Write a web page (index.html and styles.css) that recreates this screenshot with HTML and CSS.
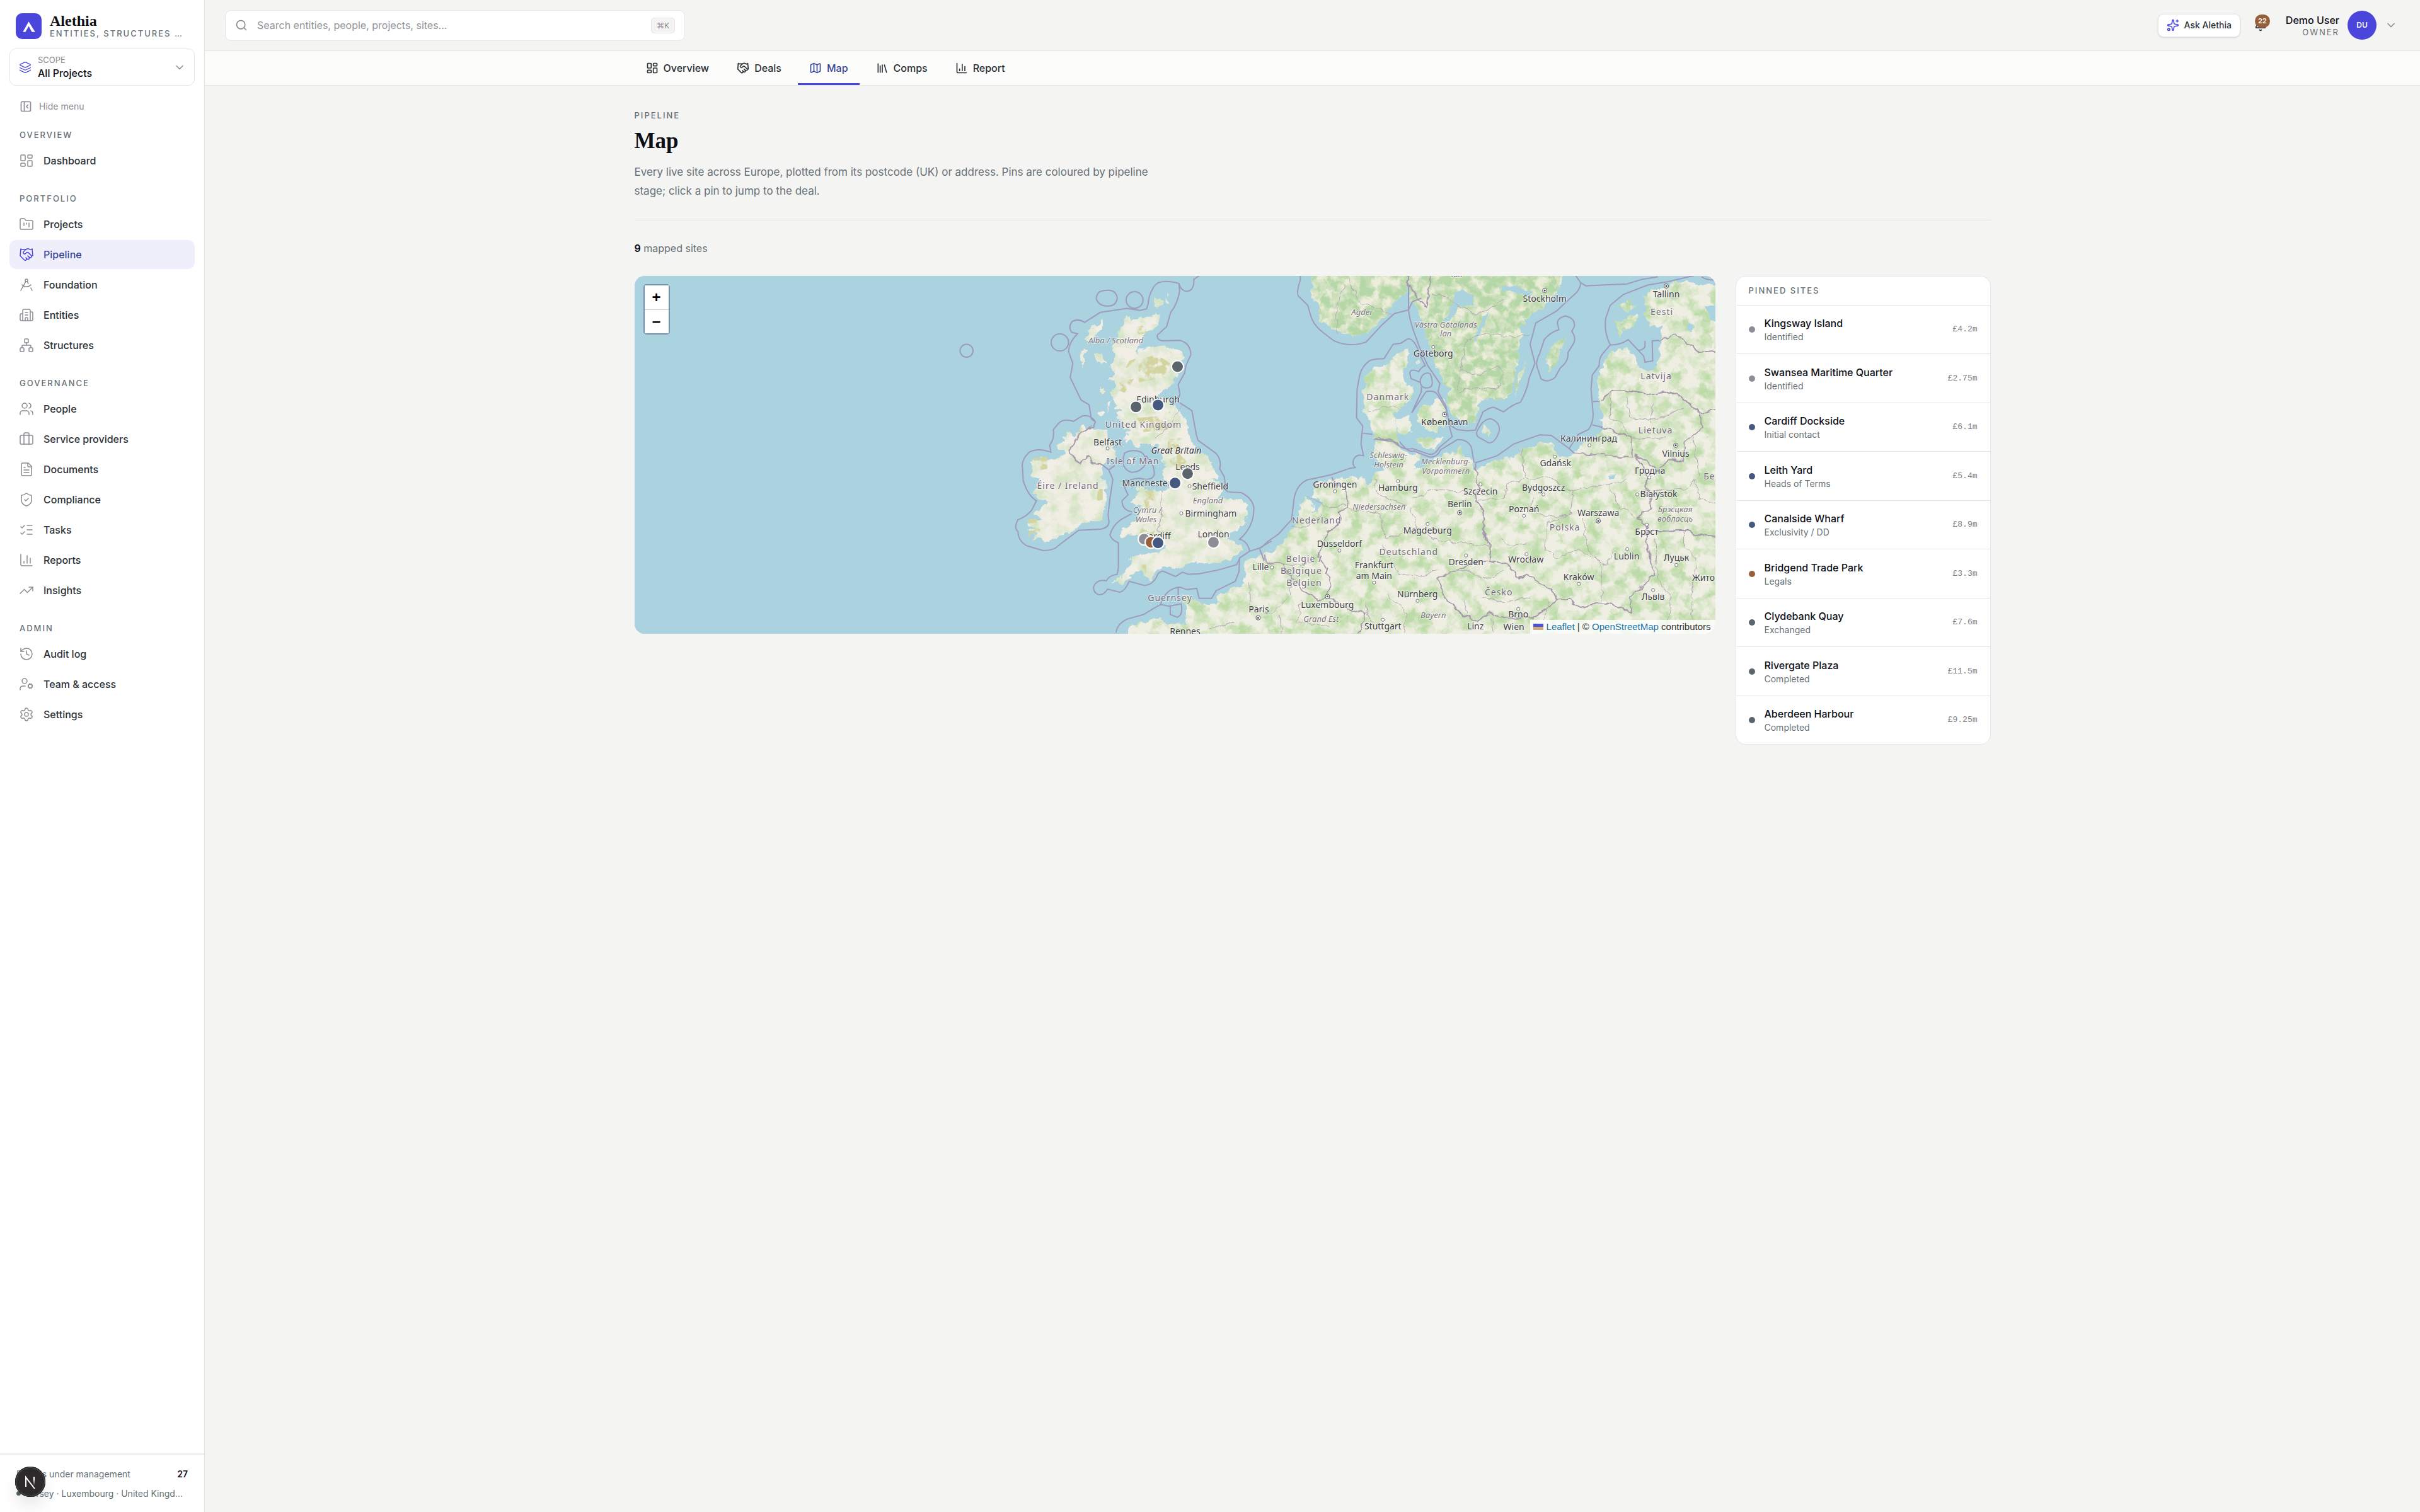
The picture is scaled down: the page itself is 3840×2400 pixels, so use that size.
FILE: index.html
```html
<!DOCTYPE html>
<html lang="en">
<head>
<meta charset="utf-8">
<meta name="viewport" content="width=device-width, initial-scale=1">
<title>Map · Pipeline · Alethia</title>
<link rel="stylesheet" href="styles.css">
</head>
<body>
<svg class="sprite" aria-hidden="true">
  <symbol id="i-layers" viewBox="0 0 24 24"><path d="M12.83 2.18a2 2 0 0 0-1.66 0L2.6 6.08a1 1 0 0 0 0 1.83l8.58 3.91a2 2 0 0 0 1.66 0l8.58-3.9a1 1 0 0 0 0-1.83z"/><path d="M2 12a1 1 0 0 0 .58.91l8.6 3.91a2 2 0 0 0 1.65 0l8.58-3.9A1 1 0 0 0 22 12"/><path d="M2 17a1 1 0 0 0 .58.91l8.6 3.91a2 2 0 0 0 1.65 0l8.58-3.9A1 1 0 0 0 22 17"/></symbol>
  <symbol id="i-chevron" viewBox="0 0 24 24"><path d="m6 9 6 6 6-6"/></symbol>
  <symbol id="i-panel" viewBox="0 0 24 24"><rect width="18" height="18" x="3" y="3" rx="2"/><path d="M9 3v18"/><path d="m16 15-3-3 3-3"/></symbol>
  <symbol id="i-dashboard" viewBox="0 0 24 24"><rect width="7" height="9" x="3" y="3" rx="1"/><rect width="7" height="5" x="14" y="3" rx="1"/><rect width="7" height="9" x="14" y="12" rx="1"/><rect width="7" height="5" x="3" y="16" rx="1"/></symbol>
  <symbol id="i-folder" viewBox="0 0 24 24"><path d="M4 20h16a2 2 0 0 0 2-2V8a2 2 0 0 0-2-2h-7.93a2 2 0 0 1-1.66-.9l-.82-1.2A2 2 0 0 0 7.93 3H4a2 2 0 0 0-2 2v13c0 1.1.9 2 2 2Z"/><path d="M8 10v4"/><path d="M12 10v2"/><path d="M16 10v6"/></symbol>
  <symbol id="i-handshake" viewBox="0 0 24 24"><path d="m11 17 2 2a1 1 0 1 0 3-3"/><path d="m14 14 2.5 2.5a1 1 0 1 0 3-3l-3.88-3.88a3 3 0 0 0-4.24 0l-.88.88a1 1 0 1 1-3-3l2.81-2.81a5.79 5.79 0 0 1 7.06-.87l.47.28a2 2 0 0 0 1.42.25L21 4"/><path d="m21 3 1 11h-2"/><path d="M3 3 2 14l6.5 6.5a1 1 0 1 0 3-3"/><path d="M3 4h8"/></symbol>
  <symbol id="i-compass" viewBox="0 0 24 24"><path d="m12.99 6.74 1.93 3.44"/><path d="M19.136 12a10 10 0 0 1-14.271 0"/><path d="m21 21-2.16-3.84"/><path d="m3 21 8.02-14.26"/><circle cx="12" cy="5" r="2"/></symbol>
  <symbol id="i-building" viewBox="0 0 24 24"><path d="M10 12h4"/><path d="M10 8h4"/><path d="M14 21v-3a2 2 0 0 0-4 0v3"/><path d="M6 10H4a2 2 0 0 0-2 2v7a2 2 0 0 0 2 2h16a2 2 0 0 0 2-2V9a2 2 0 0 0-2-2h-2"/><path d="M6 21V5a2 2 0 0 1 2-2h8a2 2 0 0 1 2 2v16"/></symbol>
  <symbol id="i-network" viewBox="0 0 24 24"><rect x="16" y="16" width="6" height="6" rx="1"/><rect x="2" y="16" width="6" height="6" rx="1"/><rect x="9" y="2" width="6" height="6" rx="1"/><path d="M5 16v-3a1 1 0 0 1 1-1h12a1 1 0 0 1 1 1v3"/><path d="M12 12V8"/></symbol>
  <symbol id="i-users" viewBox="0 0 24 24"><path d="M16 21v-2a4 4 0 0 0-4-4H6a4 4 0 0 0-4 4v2"/><path d="M16 3.128a4 4 0 0 1 0 7.744"/><path d="M22 21v-2a4 4 0 0 0-3-3.87"/><circle cx="9" cy="7" r="4"/></symbol>
  <symbol id="i-briefcase" viewBox="0 0 24 24"><path d="M16 20V4a2 2 0 0 0-2-2h-4a2 2 0 0 0-2 2v16"/><rect width="20" height="14" x="2" y="6" rx="2"/></symbol>
  <symbol id="i-file" viewBox="0 0 24 24"><path d="M6 22a2 2 0 0 1-2-2V4a2 2 0 0 1 2-2h8a2.4 2.4 0 0 1 1.704.706l3.588 3.588A2.4 2.4 0 0 1 20 8v12a2 2 0 0 1-2 2z"/><path d="M14 2v5a1 1 0 0 0 1 1h5"/><path d="M10 9H8"/><path d="M16 13H8"/><path d="M16 17H8"/></symbol>
  <symbol id="i-shield" viewBox="0 0 24 24"><path d="M20 13c0 5-3.5 7.5-7.66 8.95a1 1 0 0 1-.67-.01C7.5 20.5 4 18 4 13V6a1 1 0 0 1 1-1c2 0 4.5-1.2 6.24-2.72a1.17 1.17 0 0 1 1.52 0C14.51 3.81 17 5 19 5a1 1 0 0 1 1 1z"/><path d="m9 12 2 2 4-4"/></symbol>
  <symbol id="i-checks" viewBox="0 0 24 24"><path d="M13 5h8"/><path d="M13 12h8"/><path d="M13 19h8"/><path d="m3 17 2 2 4-4"/><path d="m3 7 2 2 4-4"/></symbol>
  <symbol id="i-chart" viewBox="0 0 24 24"><path d="M3 3v16a2 2 0 0 0 2 2h16"/><path d="M18 17V9"/><path d="M13 17V5"/><path d="M8 17v-3"/></symbol>
  <symbol id="i-trend" viewBox="0 0 24 24"><path d="M16 7h6v6"/><path d="m22 7-8.5 8.5-5-5L2 17"/></symbol>
  <symbol id="i-history" viewBox="0 0 24 24"><path d="M3 12a9 9 0 1 0 9-9 9.75 9.75 0 0 0-6.74 2.74L3 8"/><path d="M3 3v5h5"/><path d="M12 7v5l4 2"/></symbol>
  <symbol id="i-usercog" viewBox="0 0 24 24"><path d="M10 15H6a4 4 0 0 0-4 4v2"/><path d="m14.305 16.53.923-.382"/><path d="m15.228 13.852-.923-.383"/><path d="m16.852 12.228-.383-.923"/><path d="m16.852 17.772-.383.924"/><path d="m19.148 12.228.383-.923"/><path d="m19.53 18.696-.382-.924"/><path d="m20.772 13.852.924-.383"/><path d="m20.772 16.148.924.383"/><circle cx="18" cy="15" r="3"/><circle cx="9" cy="7" r="4"/></symbol>
  <symbol id="i-settings" viewBox="0 0 24 24"><path d="M9.671 4.136a2.34 2.34 0 0 1 4.659 0 2.34 2.34 0 0 0 3.319 1.915 2.34 2.34 0 0 1 2.33 4.033 2.34 2.34 0 0 0 0 3.831 2.34 2.34 0 0 1-2.33 4.033 2.34 2.34 0 0 0-3.319 1.915 2.34 2.34 0 0 1-4.659 0 2.34 2.34 0 0 0-3.32-1.915 2.34 2.34 0 0 1-2.33-4.033 2.34 2.34 0 0 0 0-3.831A2.34 2.34 0 0 1 6.35 6.051a2.34 2.34 0 0 0 3.319-1.915"/><circle cx="12" cy="12" r="3"/></symbol>
  <symbol id="i-search" viewBox="0 0 24 24"><path d="m21 21-4.34-4.34"/><circle cx="11" cy="11" r="8"/></symbol>
  <symbol id="i-sparkles" viewBox="0 0 24 24"><path d="M11.017 2.814a1 1 0 0 1 1.966 0l1.051 5.558a2 2 0 0 0 1.594 1.594l5.558 1.051a1 1 0 0 1 0 1.966l-5.558 1.051a2 2 0 0 0-1.594 1.594l-1.051 5.558a1 1 0 0 1-1.966 0l-1.051-5.558a2 2 0 0 0-1.594-1.594l-5.558-1.051a1 1 0 0 1 0-1.966l5.558-1.051a2 2 0 0 0 1.594-1.594z"/><path d="M20 2v4"/><path d="M22 4h-4"/><circle cx="4" cy="20" r="2"/></symbol>
  <symbol id="i-bell" viewBox="0 0 24 24"><path d="M10.268 21a2 2 0 0 0 3.464 0"/><path d="M3.262 15.326A1 1 0 0 0 4 17h16a1 1 0 0 0 .74-1.673C19.41 13.956 18 12.499 18 8A6 6 0 0 0 6 8c0 4.499-1.411 5.956-2.738 7.326"/></symbol>
  <symbol id="i-map" viewBox="0 0 24 24"><path d="M14.106 5.553a2 2 0 0 0 1.788 0l3.659-1.83A1 1 0 0 1 21 4.619v12.764a1 1 0 0 1-.553.894l-4.553 2.277a2 2 0 0 1-1.788 0l-4.212-2.106a2 2 0 0 0-1.788 0l-3.659 1.83A1 1 0 0 1 3 19.381V6.618a1 1 0 0 1 .553-.894l4.553-2.277a2 2 0 0 1 1.788 0z"/><path d="M15 5.764v15"/><path d="M9 3.236v15"/></symbol>
  <symbol id="i-library" viewBox="0 0 24 24"><path d="m16 6 4 14"/><path d="M12 6v14"/><path d="M8 8v12"/><path d="M4 4v16"/></symbol>
</svg>

<div class="app">
  <aside class="sidebar">
    <div class="brand">
      <span class="brand-mark"><svg viewBox="0 0 40 40" aria-hidden="true"><path d="M11 29 20 13l10 16h-5l-5-9-5 9z" fill="#fff"/></svg></span>
      <div class="brand-text">
        <div class="brand-name">Alethia</div>
        <div class="brand-tag">ENTITIES, STRUCTURES …</div>
      </div>
    </div>
    <button class="scope" type="button">
      <svg class="icon scope-icon"><use href="#i-layers"/></svg>
      <span class="scope-text"><span class="scope-label">SCOPE</span><span class="scope-value">All Projects</span></span>
      <svg class="icon chevron"><use href="#i-chevron"/></svg>
    </button>
    <button class="hide-menu" type="button"><svg class="icon"><use href="#i-panel"/></svg>Hide menu</button>
    <nav class="nav" aria-label="Main">
      <h2>OVERVIEW</h2>
      <ul>
        <li><a href="#"><svg class="icon"><use href="#i-dashboard"/></svg>Dashboard</a></li>
      </ul>
      <h2>PORTFOLIO</h2>
      <ul>
        <li><a href="#"><svg class="icon"><use href="#i-folder"/></svg>Projects</a></li>
        <li><a href="#" class="active" aria-current="page"><svg class="icon"><use href="#i-handshake"/></svg>Pipeline</a></li>
        <li><a href="#"><svg class="icon"><use href="#i-compass"/></svg>Foundation</a></li>
        <li><a href="#"><svg class="icon"><use href="#i-building"/></svg>Entities</a></li>
        <li><a href="#"><svg class="icon"><use href="#i-network"/></svg>Structures</a></li>
      </ul>
      <h2>GOVERNANCE</h2>
      <ul>
        <li><a href="#"><svg class="icon"><use href="#i-users"/></svg>People</a></li>
        <li><a href="#"><svg class="icon"><use href="#i-briefcase"/></svg>Service providers</a></li>
        <li><a href="#"><svg class="icon"><use href="#i-file"/></svg>Documents</a></li>
        <li><a href="#"><svg class="icon"><use href="#i-shield"/></svg>Compliance</a></li>
        <li><a href="#"><svg class="icon"><use href="#i-checks"/></svg>Tasks</a></li>
        <li><a href="#"><svg class="icon"><use href="#i-chart"/></svg>Reports</a></li>
        <li><a href="#"><svg class="icon"><use href="#i-trend"/></svg>Insights</a></li>
      </ul>
      <h2>ADMIN</h2>
      <ul>
        <li><a href="#"><svg class="icon"><use href="#i-history"/></svg>Audit log</a></li>
        <li><a href="#"><svg class="icon"><use href="#i-usercog"/></svg>Team &amp; access</a></li>
        <li><a href="#"><svg class="icon"><use href="#i-settings"/></svg>Settings</a></li>
      </ul>
    </nav>
    <footer class="side-foot">
      <div class="foot-row"><span>Entities under management</span><b>27</b></div>
      <div class="foot-row foot-places"><i class="foot-dot"></i><span>Jersey · Luxembourg · United Kingd…</span></div>
    </footer>
    <button class="dev-badge" type="button" aria-label="Open developer tools">
      <svg viewBox="0 0 48 48" aria-hidden="true">
        <defs><linearGradient id="nfade" x1="0" y1="0" x2="0" y2="1"><stop offset=".3" stop-color="#fff"/><stop offset="1" stop-color="#fff" stop-opacity="0"/></linearGradient></defs>
        <path d="M17 32V17l14 18" fill="none" stroke="#fff" stroke-width="2"/><path d="M29 16h2v14h-2z" fill="url(#nfade)"/>
      </svg>
    </button>
  </aside>

  <div class="page">
    <header class="topbar">
      <label class="search">
        <svg class="icon"><use href="#i-search"/></svg>
        <input type="text" placeholder="Search entities, people, projects, sites..." aria-label="Search">
        <kbd>⌘K</kbd>
      </label>
      <div class="top-actions">
        <button class="ask" type="button"><svg class="icon"><use href="#i-sparkles"/></svg>Ask Alethia</button>
        <button class="bell" type="button" aria-label="Notifications"><svg class="icon"><use href="#i-bell"/></svg><span class="badge">22</span></button>
        <button class="user" type="button">
          <span class="user-text"><span class="user-name">Demo User</span><span class="user-role">OWNER</span></span>
          <span class="avatar">DU</span>
          <svg class="icon chevron"><use href="#i-chevron"/></svg>
        </button>
      </div>
    </header>

    <nav class="subnav" aria-label="Pipeline">
      <div class="wrap tabs">
        <a href="#"><svg class="icon"><use href="#i-dashboard"/></svg>Overview</a>
        <a href="#"><svg class="icon"><use href="#i-handshake"/></svg>Deals</a>
        <a href="#" class="active" aria-current="page"><svg class="icon"><use href="#i-map"/></svg>Map</a>
        <a href="#"><svg class="icon"><use href="#i-library"/></svg>Comps</a>
        <a href="#"><svg class="icon"><use href="#i-chart"/></svg>Report</a>
      </div>
    </nav>

    <main class="wrap content">
      <header class="page-head">
        <p class="eyebrow">PIPELINE</p>
        <h1>Map</h1>
        <p class="lead">Every live site across Europe, plotted from its postcode (UK) or address. Pins are coloured by pipeline stage; click a pin to jump to the deal.</p>
      </header>
      <p class="count"><b>9</b> mapped sites</p>

      <div class="board">
        <section class="map" aria-label="Map of sites">
          <svg class="map-canvas" viewBox="0 0 1716 568" preserveAspectRatio="xMinYMin slice">
            <defs>
              <filter id="rough" x="-5%" y="-5%" width="110%" height="110%"><feTurbulence type="fractalNoise" baseFrequency=".09" numOctaves="4" seed="3"/><feDisplacementMap in="SourceGraphic" scale="13" xChannelSelector="R" yChannelSelector="G"/></filter>
              <filter id="wander" x="-5%" y="-5%" width="110%" height="110%"><feTurbulence type="fractalNoise" baseFrequency=".03" numOctaves="2" seed="4"/><feDisplacementMap in="SourceGraphic" scale="26" xChannelSelector="R" yChannelSelector="G"/></filter>
              <filter id="woods" x="0" y="0" width="100%" height="100%" color-interpolation-filters="sRGB"><feTurbulence type="fractalNoise" baseFrequency=".045" numOctaves="5" seed="11"/><feColorMatrix values="0 0 0 0 .74  0 0 0 0 .86  0 0 0 0 .66  0 3 0 0 -1.2"/><feComposite in2="SourceGraphic" operator="in"/></filter>
              <filter id="dense" x="0" y="0" width="100%" height="100%" color-interpolation-filters="sRGB"><feTurbulence type="fractalNoise" baseFrequency=".06" numOctaves="5" seed="5"/><feColorMatrix values="0 0 0 0 .71  0 0 0 0 .84  0 0 0 0 .65  0 3 0 0 -.9"/><feComposite in2="SourceGraphic" operator="in"/></filter>
              <filter id="moor" x="0" y="0" width="100%" height="100%" color-interpolation-filters="sRGB"><feTurbulence type="fractalNoise" baseFrequency=".03" numOctaves="4" seed="8"/><feColorMatrix values="0 0 0 0 .83  0 0 0 0 .83  0 0 0 0 .63  0 6 0 0 -2.4"/><feComposite in2="SourceGraphic" operator="in"/></filter>
              <g id="isles" transform="translate(594 -8) scale(.3827 .3763)">
                <path d="M485 190L510 203 540 200 600 190 628 183 622 225 590 250 565 268 545 300 528 350 545 335 580 325 640 318 710 325 726 350 718 385 700 430 680 465 665 495 640 505 610 535 650 540 675 562 710 590 735 635 748 690 755 720 782 765 825 785 848 825 868 878 830 872 875 892 885 930 872 965 920 960 960 965 985 985 990 1030 975 1065 950 1095 915 1115 900 1130 965 1158 968 1170 950 1195 900 1225 860 1232 830 1235 760 1230 740 1245 700 1255 640 1250 610 1268 600 1285 585 1305 550 1270 520 1272 500 1295 465 1328 450 1310 430 1312 480 1280 510 1240 512 1205 560 1195 620 1190 655 1160 625 1165 600 1155 550 1145 535 1120 510 1112 475 1128 465 1108 470 1085 510 1070 535 1050 545 1010 560 990 500 985 530 960 540 925 600 922 640 930 662 905 640 875 650 820 632 800 640 770 610 755 625 735 560 730 530 745 515 715 480 720 485 690 505 670 475 665 450 620 470 590 440 580 440 545 425 520 445 480 415 455 440 430 420 400 440 350 425 320 450 300 450 260 475 230z"/>
                <path d="M392 208L385 248 360 270 345 295 322 285 330 255zM350 350L385 343 392 370 408 395 370 392zM302 325L320 330 315 375 308 410 298 395zM612 112L632 118 640 140 620 165 605 145zM655 85L665 95 655 108zM650 120L658 130 648 138zM372 490L410 500 390 520 378 510zM408 560L425 545 400 600zM370 590L395 590 388 612 372 606zM455 600L470 610 462 632 450 625zM500 795L525 780 520 800 505 808zM530 918L550 905 562 920 540 932z"/>
                <path d="M305 650L320 665 345 665 378 672 402 670 415 705 445 750 440 800 410 795 392 825 385 870 402 915 405 975 395 1010 382 1052 330 1062 300 1072 255 1105 190 1130 142 1150 135 1130 92 1135 110 1110 78 1095 112 1090 72 1062 140 1050 100 1030 130 1010 170 975 130 965 95 940 120 905 128 875 92 865 100 840 92 795 130 790 180 800 240 770 200 735 225 720 220 695 250 680 275 700 290 665z"/>
              </g>
              <g id="mainland" transform="translate(1094 -8) scale(.40816 .3763)">
                <path d="M-760 1540L-756 1500-700 1480-662 1468-634 1465-620 1490-590 1490-531 1492-536 1430-555 1368-512 1372-498 1400-447 1410-409 1402-409 1370-362 1345-311 1320-305 1260-301 1220-240 1200-203 1180-165 1150-133 1110-105 1060-90 985-72 955-50 965-38 1005-60 1015-20 1010-10 970-35 960-39 925-20 895 31 885 69 875 116 868 150 870 175 905 185 870 195 850 235 842 205 805 190 760 205 710 190 690 183 640 160 610 155 500 165 440 200 405 250 395 285 350 330 318 325 400 305 440 320 485 352 490 345 530 300 580 270 610 280 660 285 720 310 758 340 780 380 770 370 800 350 830 385 830 440 790 510 760 530 745 560 790 575 810 590 840 640 810 735 785 770 755 860 720 885 722 900 770 920 785 965 775 1020 720 1070 690 1088 670 1080 600 1070 550 1068 460 1080 420 1105 350 1180 318 1215 370 1235 415 1265 425 1300 395 1308 295 1315 230 1280 240 1245 200 1255 150 1245 115 1270 85 1330 65 1400 40 1470 60 1560 65V1560H-760z"/>
                <path d="M360 600L390 570 425 575 440 545 470 550 475 620 465 660 440 650 440 690 400 670 370 640zM275 625L330 615 345 660 320 690 285 670zM365 710L400 705 435 712 465 700 440 740 415 755 370 735zM355 380L370 378 362 390z"/>
                <path d="M622 655L650 678 648 696 620 685z"/>
              </g>
              <g id="nordic" transform="translate(1094 -8) scale(.40816 .3763)">
                <path d="M-44 0L-44 60-48 100-25 140-15 200 41 250 60 260 120 278 190 250 240 190 275 130 320 90 325 50 340 130 365 160 380 200 400 280 420 340 440 400 465 460 490 500 480 560 500 610 560 645 590 640 600 570 620 540 700 545 730 510 745 440 755 350 765 280 780 210 830 170 870 140 905 90 925 50 930 0z"/>
                <path d="M945 285L905 300 880 330 865 370 880 430 910 390 920 340zM790 375L755 450 740 530 765 480zM1135 215L1190 190 1230 185 1220 215 1165 255 1145 285 1140 240zM1140 150L1185 120 1215 150 1180 175z"/>
              </g>
            </defs>

            <rect width="1716" height="568" fill="#aad3df"/>
            <g filter="url(#rough)">
              <use href="#isles" fill="#f1eee5"/>
              <use href="#mainland" fill="#efeee2"/>
              <use href="#nordic" fill="#ecedda"/>
              <use href="#isles" filter="url(#woods)" opacity=".5"/>
              <use href="#mainland" filter="url(#woods)"/>
              <use href="#nordic" filter="url(#dense)"/>
            </g>
            <g filter="url(#moor)" fill="#000" transform="translate(594 -8) scale(.3827 .3763)">
              <path d="M525 240l30-10 20 30-35 10zM560 370l50-20 60 40-20 60-110 20 0-70zM460 470l60-15-40 60-20-10zM500 380l25-10-10 30-30 10zM530 620l120-10 20-20-10 80-100 10zM660 710l60-5-20 60 40 40-50 40-30-60zM100 790l60-5 0 50-45 10zM370 920l20 0 0 50-25 0zM550 930l50-5 10 60-40 20zM560 1070l50 0-10 50-60-10zM550 1240l20 0 0 40-20 0zM90 1080l40 10-10 40-40-10zM75 1050l40-5 0 20-30 0zM290 660l30 0-5 20-20 5z"/>
            </g>
            <g fill="#aad3df" filter="url(#wander)" transform="translate(1094 -8) scale(.40816 .3763)">
              <path d="M510 85l30-5 40 20 0 45-60 10-30 55-25 0 40-70zM640 175l-15 50-35 80-5-20 35-90zM690 65l60 0 60 20-10 25-50-20-60-5zM1485 150l60-20v90l-35-10zM1415 225l20 0 0 30-18 0zM1110 860l25 0-5 15-20 0z"/>
            </g>

            <g class="border" filter="url(#wander)" transform="translate(1094 -8) scale(.40816 .3763)">
              <path d="M35 870L45 900 85 910 90 1000 60 1020 70 1050 20 1100 0 1150M0 1150L-20 1200 15 1270 25 1330 10 1370 100 1430 165 1445 130 1530M-230 1200L-225 1240-170 1230-140 1270-110 1310-80 1350-20 1385 10 1375"/>
              <path d="M590 810L600 930 590 970 620 1010 625 1110 645 1170 640 1220M640 1220L560 1240 440 1300 470 1380 540 1450 600 1480 640 1440 720 1470 820 1460 910 1390M640 1220L720 1240 760 1300 790 1280 840 1320 890 1350 910 1390 950 1385 1000 1420 1070 1400 1130 1410 1200 1445 1190 1380 1285 1280 1255 1140 1260 1080 1220 1040 1275 1000 1265 930 1245 830 1210 780"/>
              <path d="M975 770L1200 785 1195 700 1150 685 1085 660M1210 780L1250 800 1300 840 1340 800 1400 800 1405 720 1440 690 1475 660 1460 600 1400 540 1340 505 1280 520 1190 505 1120 505 1075 550M1460 600L1530 590M1305 295L1370 265 1420 310 1460 345 1530 340M1260 1100L1400 1095 1530 1130M195 710L260 715 295 735M330 20L330 60 370 120 400 150 415 20"/>
            </g>
            <g class="border thin" filter="url(#wander)" transform="translate(1094 -8) scale(.40816 .3763)">
              <path d="M95 20L120 90 150 140 200 150 265 190M50 270L50 140 80 60M420 100L480 110 520 150 600 180 650 160 700 120M520 500L530 420 560 290 640 260 700 280 800 270M530 420L600 440 680 400 700 430 670 500 600 490 520 510M170 590L260 570 300 585M770 755L775 820 790 880 870 870 900 890 970 930 1110 900 1180 880M970 930L960 1030 870 1060 860 1180 910 1210 990 1180 1100 1240 1130 1180M820 960L800 1000 870 1040 950 1030M1110 900L1140 980 1210 1040M1010 1040L1030 1180 1080 1240 1085 1400M690 1130L720 1160 790 1150M600 970L700 960 710 900 790 880M470 1280L550 1260 640 1300 700 1260M550 1390L560 1450M620 1380L700 1400 800 1380M350 960L430 920 600 940M340 1000L360 1090 240 1130 220 1030 85 1000M360 1090L450 1140 640 1160M230 1160L290 1280 390 1290 440 1260M250 1370L320 1440 310 1530M160 1400L180 1480M1120 510L1110 620 1160 640 1190 700M1180 530L1190 620 1280 630 1400 580M1270 640L1285 550M1190 700L1240 710 1330 700M1440 700L1460 870 1400 920 1290 930M1440 880L1460 960 1530 990M1400 1100L1400 1160 1450 1220M1290 1130L1300 1300 1350 1380 1340 1500M1440 1530L1430 1360 1450 1240M195 880L210 940 320 990M880 1390L850 1480M640 1440L660 1520M-290 1320L-290 1420-200 1450-130 1370-120 1240M-170 1450L-165 1530M-90 1390L-100 1480 20 1500M-340 1480L-440 1510M-230 1230L-120 1240-40 1230M-120 1080L-60 1080-10 1030M-60 950L20 1000 80 990"/>
            </g>
            <g class="border" filter="url(#wander)" transform="translate(594 -8) scale(.3827 .3763)"><path d="M350 655L290 690 265 745 250 770 295 810 330 780 360 820 390 822"/></g>
            <g class="border thin" filter="url(#wander)" transform="translate(594 -8) scale(.3827 .3763)"><path d="M610 700L660 660 690 610 730 570M640 930L630 980 635 1030 620 1090 640 1120"/></g>

            <g class="sea-line" transform="translate(594 -8) scale(.3827 .3763)">
              <path d="M790 20Q775 32 768 35Q770 85 738 86 715 85 706 53Q620 30 600 70Q580 105 578 140L572 160 545 167 490 158 380 175 315 217Q290 200 265 212 245 235 260 258L285 265Q250 300 248 340L266 390 255 450 300 545 333 565 343 625 360 637"/>
              <path d="M706 53L709 85Q700 140 672 175L655 235 617 270Q612 292 640 295L710 293Q755 305 755 355L735 400 730 430 703 480 710 520 700 550 760 590 778 690 785 715 860 770Q885 800 875 835L895 870 900 925 910 933 965 936Q1012 960 1017 1000 1018 1080 958 1133Q990 1140 1000 1183L960 1210 945 1240 870 1262 790 1278 745 1280 720 1272 692 1290 640 1267Q618 1270 612 1295 590 1330 560 1327L500 1310Q480 1355 460 1356L410 1343Q395 1368 375 1367 350 1360 352 1333 365 1300 405 1308 415 1285 450 1280L455 1250V1148Q425 1135 420 1115 430 1075 465 1050L510 1025"/>
              <path d="M360 637Q340 605 305 612L268 635Q225 620 205 645L185 670Q190 710 170 735L175 765Q120 745 85 765 50 800 57 830L60 885Q80 950 115 970L95 1010Q70 1040 38 1050 20 1085 38 1100 40 1140 75 1160L140 1180Q190 1180 205 1160L290 1095 380 1090Q415 1085 416 1060L412 1030 420 960 432 880 415 840 390 820M360 637L352 655"/>
              <path d="M512 1017Q470 1010 470 970L495 945Q475 910 480 885L540 875Q600 890 604 855L600 825 570 780M415 840L440 822M480 770Q510 750 550 765 580 790 565 820 545 850 510 850 460 835 480 770z"/>
              <path d="M395 83Q365 85 363 118 375 150 410 148 445 150 450 115 445 80 410 82z"/><circle cx="522" cy="123" r="35"/><circle cx="212" cy="302" r="36"/><ellipse cx="-175" cy="337" rx="27" ry="27"/>
              <path d="M445 1526Q450 1490 490 1470L560 1450 600 1425 630 1408Q650 1340 710 1335L740 1345 780 1340 790 1382 842 1382 860 1350 940 1310 955 1270 958 1210M703 1335V1395M630 1408L665 1415 715 1405Q725 1450 700 1462L670 1450V1415M1000 1183L1040 1170 1090 1140M1040 1170L1060 1225"/>
            </g>
            <g class="sea-line" transform="translate(1094 -8) scale(.40816 .3763)">
              <path d="M-91 0L-91 40Q-110 100-95 110L-62 145-50 190Q-40 230 0 262L40 295Q100 325 165 300L225 230 275 180 330 165M330 60V165Q335 210 352 260L372 320 405 400 452 475 445 510 475 570 490 650 520 670 560 675 590 672 620 595Q655 570 665 577L700 595Q740 560 765 555 790 510 800 450L822 390 803 310 825 220 905 170 985 90Q1005 60 997 45L980 20M330 165L345 130 380 115"/>
              <path d="M372 345Q350 280 325 288L300 305 270 310 235 370Q200 370 180 378 150 400 140 440L130 500 128 620 152 655 145 730 155 780Q125 770 115 800 112 825 125 830L105 832 30 860Q-50 880-60 880-105 900-115 960L-125 1050-175 1110-215 1140-245 1170M370 345L395 400Q380 405 370 425 340 410 335 430L340 455 375 470M385 440Q400 425 415 435 430 480 415 490 395 500 380 485 370 460 385 440zM380 490V510L342 600 398 510Q430 500 445 525L480 590M152 685L190 690M200 710L270 720Q310 760 345 750L400 770Q430 785 450 745L500 700 485 640M295 720Q330 770 350 760L410 785Q440 790 455 755L520 712Q560 710 575 745L585 810"/>
              <path d="M590 810L675 780 740 730 840 692 885 694 955 750 975 770M955 750L990 690 1030 670Q1050 640 1048 600L1040 500 1045 440 1072 400Q1070 370 1085 350L1115 312Q1150 315 1185 290L1245 360 1250 385 1280 380 1278 295 1305 293M1250 295V320Q1240 335 1225 335M1115 312Q1090 260 1097 200L1115 145 1165 100 1260 60 1340 45 1440 20M1000 50L1020 63 1180 55 1240 35 1300 25M1470 25Q1490 40 1520 38M1048 552L1075 550M1045 650L1085 660"/>
              <path d="M910 225Q905 200 940 190 980 200 975 235L965 255Q985 285 970 310L950 345Q955 380 920 410L900 450Q870 475 845 455L835 420Q820 390 840 350L858 290Q880 260 915 248z"/>
              <path d="M650 624Q690 640 682 680 665 730 640 725L600 700Q590 685 600 670 620 625 650 624z"/>
            </g>

            <g class="town">
              <circle cx="751" cy="274" r="2.5"/><circle cx="881" cy="334" r="2.5"/><circle cx="868" cy="377" r="2.5"/><circle cx="1112" cy="342" r="2.5"/><circle cx="1119" cy="436" r="2.5"/><circle cx="1012" cy="463" r="2.5"/><circle cx="1268" cy="113" r="2.5"/><circle cx="1516" cy="269" r="2.5"/><circle cx="1461" cy="287" r="2.5"/><circle cx="1611" cy="320" r="2.5"/><circle cx="1212" cy="326" r="2.5"/><circle cx="1343" cy="331" r="2.5"/><circle cx="1443" cy="347" r="2.5"/><circle cx="1592" cy="347" r="2.5"/><circle cx="1412" cy="381" r="2.5"/><circle cx="1259" cy="394" r="2.5"/><circle cx="1607" cy="395" r="2.5"/><circle cx="1576" cy="434" r="2.5"/><circle cx="1654" cy="459" r="2.5"/><circle cx="1320" cy="444" r="2.5"/><circle cx="1416" cy="442" r="2.5"/><circle cx="1174" cy="487" r="2.5"/><circle cx="1499" cy="489" r="2.5"/><circle cx="1243" cy="516" r="2.5"/><circle cx="1617" cy="499" r="2.5"/><circle cx="1403" cy="529" r="2.5"/><circle cx="1188" cy="546" r="2.5"/>
            </g>
            <g class="capital">
              <circle cx="1100" cy="509" r="3.5"/><circle cx="990" cy="543" r="3.5"/><circle cx="1445" cy="23" r="3.5"/><circle cx="1638" cy="16" r="3.5"/><circle cx="1286" cy="220" r="3.5"/><circle cx="1653" cy="269" r="3.5"/><circle cx="1310" cy="376" r="3.5"/><circle cx="1530" cy="389" r="3.5"/>
            </g>
            <g class="capital-core">
              <circle cx="1100" cy="509" r="1.5"/><circle cx="990" cy="543" r="1.5"/><circle cx="1445" cy="23" r="1.5"/><circle cx="1638" cy="16" r="1.5"/><circle cx="1286" cy="220" r="1.5"/><circle cx="1653" cy="269" r="1.5"/><circle cx="1310" cy="376" r="1.5"/><circle cx="1530" cy="389" r="1.5"/>
            </g>
            <g class="label region">
              <text x="1155" y="62">Agder</text><text x="764" y="107">Alba / Scotland</text><text x="910" y="361">England</text><text x="814" y="376">Cymru /</text><text x="812" y="391">Wales</text><text x="1090" y="549">Grand Est</text><text x="1288" y="82">Västra Götalands</text><text x="1288" y="96">län</text><text x="1306" y="2">län</text><text x="1197" y="289">Schleswig-</text><text x="1197" y="304">Holstein</text><text x="1288" y="299">Mecklenburg-</text><text x="1288" y="314">Vorpommern</text><text x="1182" y="371">Niedersachsen</text><text x="1652" y="375">Брэсцкая</text><text x="1652" y="390">вобласць</text><text x="1268" y="543">Bayern</text>
            </g>
            <g class="label country">
              <text x="808" y="241">United Kingdom</text><text x="791" y="299">Isle of Man</text><text x="688" y="338">Éire / Ireland</text><text x="850" y="516">Guernsey</text><text x="1083" y="393">Nederland</text><text x="1063" y="454">België /</text><text x="1064" y="473">Belgique /</text><text x="1063" y="492">Belgien</text><text x="1631" y="62">Eesti</text><text x="1622" y="164">Latvija</text><text x="1196" y="197">Danmark</text><text x="1621" y="250">Lietuva</text><text x="1732" y="323">Беларусь</text><text x="1477" y="404">Polska</text><text x="1229" y="443">Deutschland</text><text x="1372" y="507">Česko</text>
            </g>
            <g class="label island"><text x="860" y="282">Great Britain</text></g>
            <g class="label city">
              <text x="831" y="201">Edinburgh</text><text x="751" y="269">Belfast</text><text x="878" y="308">Leeds</text><text x="813" y="334">Manchester</text><text x="914" y="339">Sheffield</text><text x="915" y="382">Birmingham</text><text x="829" y="418">Cardiff</text><text x="919" y="415">London</text><text x="874" y="569">Rennes</text><text x="1112" y="336">Groningen</text><text x="1119" y="430">Düsseldorf</text><text x="994" y="467">Lille</text><text x="1100" y="527">Luxembourg</text><text x="991" y="534">Paris</text><text x="1445" y="41">Stockholm</text><text x="1638" y="34">Tallinn</text><text x="1268" y="128">Göteborg</text><text x="1286" y="237">København</text><text x="1515" y="263">Калининград</text><text x="1653" y="287">Vilnius</text><text x="1462" y="302">Gdańsk</text><text x="1612" y="314">Гродна</text><text x="1212" y="341">Hamburg</text><text x="1343" y="347">Szczecin</text><text x="1443" y="341">Bydgoszcz</text><text x="1626" y="351">Białystok</text><text x="1310" y="367">Berlin</text><text x="1412" y="375">Poznań</text><text x="1530" y="381">Warszawa</text><text x="1259" y="409">Magdeburg</text><text x="1607" y="411">Брэст</text><text x="1575" y="450">Lublin</text><text x="1654" y="452">Луцьк</text><text x="1320" y="459">Dresden</text><text x="1415" y="455">Wrocław</text><text x="1174" y="464">Frankfurt</text><text x="1174" y="481">am Main</text><text x="1499" y="483">Kraków</text><text x="1711" y="484">Житомир</text><text x="1243" y="510">Nürnberg</text><text x="1617" y="514">Львів</text><text x="1403" y="542">Brno</text><text x="1188" y="561">Stuttgart</text><text x="1335" y="561">Linz</text><text x="1396" y="562">Wien</text>
            </g>
            <g class="pins">
              <a href="#" aria-label="Swansea Maritime Quarter"><circle class="s-early" cx="809" cy="418" r="9.5"/></a>
              <a href="#" aria-label="Bridgend Trade Park"><circle class="s-legal" cx="820" cy="423" r="9.5"/></a>
              <a href="#" aria-label="Cardiff Dockside"><circle class="s-active" cx="831" cy="424" r="9.5"/></a>
              <a href="#" aria-label="Kingsway Island"><circle class="s-early" cx="919" cy="423" r="9.5"/></a>
              <a href="#" aria-label="Canalside Wharf"><circle class="s-active" cx="858" cy="329" r="9.5"/></a>
              <a href="#" aria-label="Rivergate Plaza"><circle class="s-done" cx="878" cy="314" r="9.5"/></a>
              <a href="#" aria-label="Clydebank Quay"><circle class="s-done" cx="796" cy="208" r="9.5"/></a>
              <a href="#" aria-label="Leith Yard"><circle class="s-active" cx="831" cy="205" r="9.5"/></a>
              <a href="#" aria-label="Aberdeen Harbour"><circle class="s-done" cx="862" cy="144" r="9.5"/></a>
            </g>
          </svg>
          <div class="zoom"><button type="button" aria-label="Zoom in">+</button><button type="button" aria-label="Zoom out">−</button></div>
          <div class="credit"><svg viewBox="0 0 16 10" aria-hidden="true"><path fill="#4b55d6" d="M0 0h16v5H0z"/><path fill="#d2aa82" d="M0 5h16v5H0z"/></svg> <a href="#">Leaflet</a> | © <a href="#">OpenStreetMap</a> contributors</div>
        </section>

        <section class="panel">
          <h2>PINNED SITES</h2>
          <ul>
            <li><i class="dot d-early"></i><div><a href="#">Kingsway Island</a><p>Identified</p></div><span>£4.2m</span></li>
            <li><i class="dot d-early"></i><div><a href="#">Swansea Maritime Quarter</a><p>Identified</p></div><span>£2.75m</span></li>
            <li><i class="dot d-active"></i><div><a href="#">Cardiff Dockside</a><p>Initial contact</p></div><span>£6.1m</span></li>
            <li><i class="dot d-active"></i><div><a href="#">Leith Yard</a><p>Heads of Terms</p></div><span>£5.4m</span></li>
            <li><i class="dot d-active"></i><div><a href="#">Canalside Wharf</a><p>Exclusivity / DD</p></div><span>£8.9m</span></li>
            <li><i class="dot d-legal"></i><div><a href="#">Bridgend Trade Park</a><p>Legals</p></div><span>£3.3m</span></li>
            <li><i class="dot d-done"></i><div><a href="#">Clydebank Quay</a><p>Exchanged</p></div><span>£7.6m</span></li>
            <li><i class="dot d-done"></i><div><a href="#">Rivergate Plaza</a><p>Completed</p></div><span>£11.5m</span></li>
            <li><i class="dot d-done"></i><div><a href="#">Aberdeen Harbour</a><p>Completed</p></div><span>£9.25m</span></li>
          </ul>
        </section>
      </div>
    </main>
  </div>
</div>
</body>
</html>
```
FILE: styles.css
```css
:root {
  --ink: #0d0f17;
  --text: #2b3136;
  --muted: #667075;
  --faint: #8d8b91;
  --line: #e6e6e4;
  --bg: #f4f4f2;
  --accent: #4a45db;
  --accent-text: #3a4798;
  --early: #8e8d96;
  --active: #45587f;
  --legal: #965f39;
  --done: #5a656b;
}

* { box-sizing: border-box; }

body {
  margin: 0;
  background: var(--bg);
  color: var(--text);
  font: 400 16px/24px Inter, "Liberation Sans", sans-serif;
}

h1, h2, p, ul { margin: 0; padding: 0; }
ul { list-style: none; }
a { color: inherit; text-decoration: none; }
button { margin: 0; padding: 0; border: 0; background: none; color: inherit; font: inherit; text-align: left; cursor: pointer; }

.sprite { display: none; }

.icon {
  flex: none;
  width: 20px;
  height: 20px;
  fill: none;
  stroke: currentColor;
  stroke-width: 2;
  stroke-linecap: round;
  stroke-linejoin: round;
}

.chevron { color: var(--faint); }

.app { display: grid; grid-template-columns: 325px minmax(0, 1fr); min-height: 100vh; }

/* Sidebar */
.sidebar {
  position: sticky;
  top: 0;
  display: flex;
  flex-direction: column;
  height: 100vh;
  background: #fff;
  border-right: 1px solid var(--line);
}

.brand { display: flex; align-items: center; gap: 13px; height: 77px; padding: 5px 25px 0; }
.brand-mark { flex: none; width: 41px; height: 41px; border-radius: 10px; background: var(--accent); }
.brand-mark svg { display: block; }
.brand-name { color: var(--ink); font: 700 24px/24px "Liberation Serif", serif; }
.brand-tag { color: var(--muted); font-size: 13px; font-weight: 500; line-height: 16px; letter-spacing: 2px; white-space: nowrap; }

.scope {
  display: flex;
  align-items: center;
  gap: 10px;
  height: 59px;
  margin: 0 15px;
  padding: 0 13px 0 14px;
  border: 1px solid var(--line);
  border-radius: 10px;
}
.scope-icon { color: var(--accent); stroke-width: 1.5; }
.scope-text { flex: 1; display: grid; }
.scope-label { color: var(--faint); font-size: 13px; line-height: 18px; }
.scope-value { color: var(--ink); font-size: 16px; font-weight: 500; line-height: 24px; }

.hide-menu {
  display: flex;
  align-items: center;
  gap: 11px;
  height: 24px;
  margin: 21px 31px;
  color: var(--faint);
  font-size: 14px;
}

.nav { flex: 1; }
.nav h2 { padding: 0 31px; color: var(--muted); font-size: 13px; font-weight: 500; line-height: 24px; letter-spacing: 2px; }
.nav ul { display: grid; gap: 2px; padding: 6px 15px 25px; }
.nav a { display: flex; align-items: center; gap: 15px; height: 46px; padding: 0 15px; border-radius: 10px; font-size: 16px; font-weight: 500; }
.nav .icon { width: 24px; height: 24px; color: var(--faint); stroke-width: 1.5; }
.nav .active { background: #efeffc; color: var(--accent-text); }
.nav .active .icon { color: var(--accent); }

.side-foot { padding: 15px 26px 14px; border-top: 2px solid #ebebea; color: var(--muted); font-size: 14px; }
.foot-row { display: flex; align-items: center; justify-content: space-between; height: 31px; white-space: nowrap; }
.foot-row b { color: var(--ink); font-weight: 600; }
.foot-places { justify-content: flex-start; gap: 8px; }
.foot-dot { width: 7px; height: 7px; border-radius: 50%; background: var(--done); }

.dev-badge {
  position: absolute;
  left: 24px;
  bottom: 24px;
  width: 48px;
  height: 48px;
  border-radius: 50%;
  background: #2b292a;
  box-shadow: inset 0 0 0 1px #1a1a1a, inset 0 0 0 2px #555, 0 16px 32px -8px rgba(0, 0, 0, .2);
}
.dev-badge svg { display: block; }

/* Top bar */
.topbar {
  display: flex;
  align-items: center;
  justify-content: space-between;
  height: 81px;
  padding: 0 36px 0 32px;
  border-bottom: 1px solid var(--line);
}
.search {
  display: flex;
  align-items: center;
  gap: 15px;
  width: 730px;
  height: 49px;
  padding: 0 15px;
  border: 1px solid var(--line);
  border-radius: 10px;
  background: #fff;
  color: var(--faint);
}
.search input { flex: 1; min-width: 0; padding: 0; border: 0; outline: 0; background: none; color: var(--ink); font: inherit; }
.search input::placeholder { color: #929196; opacity: 1; }
.search kbd { width: 38px; height: 25px; border: 1px solid var(--line); border-radius: 5px; background: var(--bg); font: 400 12px/23px Inter, "DejaVu Sans", sans-serif; text-align: center; }

.top-actions { display: flex; align-items: center; }
.ask {
  display: flex;
  align-items: center;
  gap: 8px;
  height: 37px;
  margin-right: 22px;
  padding: 0 13px;
  border: 1px solid var(--line);
  border-radius: 9px;
  background: #fff;
  box-shadow: 0 1px 3px rgba(0, 0, 0, .12);
  font-size: 14px;
  font-weight: 500;
}
.ask .icon { color: var(--accent); }
.bell { position: relative; width: 20px; height: 20px; margin-right: 30px; }
.bell .icon { display: block; }
.badge {
  position: absolute;
  top: -7px;
  right: -5px;
  width: 24px;
  height: 21px;
  border-radius: 11px;
  background: var(--legal);
  color: #fff;
  font-size: 11px;
  font-weight: 600;
  line-height: 21px;
  text-align: center;
}
.user { display: flex; align-items: center; gap: 13px; }
.user-text { display: grid; text-align: right; }
.user-name { color: var(--ink); font-size: 16px; font-weight: 500; line-height: 22px; }
.user-role { color: var(--muted); font-size: 13px; line-height: 16px; letter-spacing: 2px; }
.avatar { width: 46px; height: 46px; border-radius: 50%; background: var(--accent); color: #fff; font-size: 12px; font-weight: 600; line-height: 46px; text-align: center; }

/* Pipeline tabs */
.wrap { width: 100%; max-width: 2152px; margin: 0 auto; }
.subnav { background: #fcfcfb; border-bottom: 1px solid var(--line); }
.tabs { display: flex; gap: 8px; height: 54px; }
.tabs a { display: flex; align-items: center; gap: 8px; padding: 2px 18px 0; border-bottom: 3px solid transparent; font-size: 16px; font-weight: 500; }
.tabs .active { border-color: var(--accent); color: var(--accent-text); }

/* Page */
.content { padding: 37px 0 64px; }
.page-head { padding-bottom: 31px; border-bottom: 1px solid var(--line); }
.eyebrow { color: var(--muted); font-size: 13px; font-weight: 500; line-height: 20px; letter-spacing: 2px; }
h1 { margin-top: 9px; color: var(--ink); font: 700 35px/44px "Liberation Serif", serif; }
.lead { max-width: 830px; margin-top: 12px; color: var(--muted); font-size: 17px; line-height: 30px; }
.count { margin: 32px 0; color: var(--muted); }
.count b { color: var(--ink); font-weight: 600; }

.board { display: grid; grid-template-columns: minmax(0, 1fr) 405px; gap: 32px; align-items: start; }

.map { position: relative; overflow: hidden; border-radius: 16px; background: #aad3df; }
.map-canvas { display: block; width: 100%; }

.border path { fill: none; stroke: #a698ab; stroke-width: 2; vector-effect: non-scaling-stroke; }
.thin path { stroke: #b3a8b3; stroke-width: 1; }
.sea-line * { fill: none; stroke: #9f9bbf; stroke-width: 2; vector-effect: non-scaling-stroke; }
.town circle { fill: #fff; stroke: #77757c; }
.capital circle { fill: #fff; stroke: #55525c; }
.capital-core circle { fill: #44414c; }

.label { font-family: "Noto Sans", sans-serif; font-size: 14px; text-anchor: middle; paint-order: stroke; stroke: rgba(255, 255, 255, .6); stroke-width: 2px; stroke-linejoin: round; }
.city { fill: #3f3e46; }
.country { fill: #74687b; letter-spacing: 1px; }
.region { fill: #7d747c; font-size: 13px; font-style: italic; }
.island { fill: #33323a; font-style: italic; }

.pins circle { stroke: #fff; stroke-width: 2; }
.s-early { fill: var(--early); }
.s-active { fill: var(--active); }
.s-legal { fill: var(--legal); }
.s-done { fill: var(--done); }

.zoom { position: absolute; top: 13px; left: 14px; border: 2px solid rgba(70, 80, 120, .5); border-radius: 5px; }
.zoom button { display: block; width: 38px; height: 38px; background: #fff; color: #000; font: 700 24px/36px "Liberation Sans", sans-serif; text-align: center; }
.zoom button + button { border-top: 1px solid #ccc; }

.credit { position: absolute; right: 0; bottom: 0; padding: 0 7px 0 5px; background: rgba(255, 255, 255, .8); color: #333; font: 400 15px/22px "Liberation Sans", sans-serif; white-space: nowrap; }
.credit svg { width: 16px; height: 10px; }
.credit a { color: #2474a8; }

.panel { overflow: hidden; border: 1px solid var(--line); border-radius: 16px; background: #fff; }
.panel h2 { padding: 0 20px; color: var(--muted); font-size: 13px; font-weight: 500; line-height: 45px; letter-spacing: 2px; }
.panel li { display: flex; align-items: center; gap: 15px; min-height: 77px; padding: 0 20px; border-top: 1px solid var(--line); }
.panel li:nth-child(even) { min-height: 78px; }
.panel li div { flex: 1; }
.panel li a { color: var(--ink); font-weight: 500; line-height: 24px; }
.panel li p { color: var(--muted); font-size: 14px; line-height: 20px; }
.panel li span { color: #7b8084; font: 400 13px/20px "Liberation Mono", monospace; }
.dot { width: 10px; height: 10px; border-radius: 50%; }
.d-early { background: var(--early); }
.d-active { background: var(--active); }
.d-legal { background: var(--legal); }
.d-done { background: var(--done); }
```
